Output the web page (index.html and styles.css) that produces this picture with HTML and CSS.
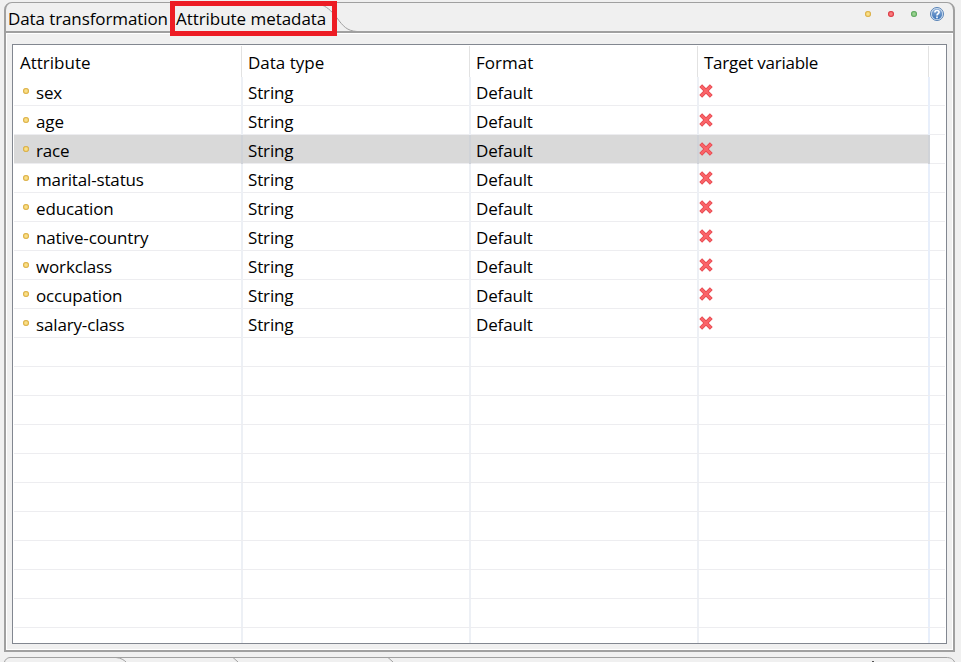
FILE: index.html
```
<!DOCTYPE html>
<html lang="en">
<head>
<meta charset="utf-8">
<title>Attribute metadata</title>
<link rel="stylesheet" href="styles.css">
</head>
<body>
<svg class="defs" width="0" height="0" aria-hidden="true">
  <defs>
    <radialGradient id="gold"><stop offset="0" stop-color="#fbe7a0"/><stop offset=".5" stop-color="#f5d677"/><stop offset="1" stop-color="#d2a02b"/></radialGradient>
    <radialGradient id="red"><stop offset="0" stop-color="#ff8c8c"/><stop offset=".5" stop-color="#f36c70"/><stop offset="1" stop-color="#d5202c"/></radialGradient>
    <radialGradient id="green"><stop offset="0" stop-color="#a5d99c"/><stop offset=".5" stop-color="#8bc884"/><stop offset="1" stop-color="#459b48"/></radialGradient>
    <linearGradient id="blue" x2="0" y2="1"><stop offset="0" stop-color="#8eafd8"/><stop offset="1" stop-color="#3c74b9"/></linearGradient>
    <symbol id="cross" viewBox="0 0 14 14">
      <path d="M1.7 1.7 12.3 12.3M12.3 1.7 1.7 12.3" stroke="#e4464e" stroke-width="4" />
      <path d="M2.1 2.1 11.9 11.9M11.9 2.1 2.1 11.9" stroke="#fa6468" stroke-width="2.4" />
    </symbol>
    <symbol id="dot" viewBox="0 0 6 6"><circle cx="3" cy="3" r="3" fill="url(#gold)"/></symbol>
  </defs>
</svg>
<main class="panel">
  <header class="tabs">
    <span class="tab first">Data transformation</span>
    <span class="tab active">Attribute metadata</span>
    <svg class="curve" width="36" height="29" viewBox="0 0 36 29"><path d="M0 2C7 5 11 10 15 15C21 23 25 28 35 28.5" fill="none" stroke="#a0a0a0"/></svg>
    <div class="tools">
      <svg width="6" height="6"><circle cx="3" cy="3" r="3" fill="url(#gold)"/></svg>
      <svg width="6" height="6"><circle cx="3" cy="3" r="3" fill="url(#red)"/></svg>
      <svg width="6" height="6"><circle cx="3" cy="3" r="3" fill="url(#green)"/></svg>
      <svg class="help" width="14" height="14" viewBox="0 0 14 14"><circle cx="7" cy="7" r="6.5" fill="#d9e5f2" stroke="#5580b5"/><circle cx="7" cy="7" r="5.2" fill="url(#blue)"/><path d="M4.9 5.5C4.9 2.9 9.1 2.9 9.1 5.3C9.1 6.8 7 6.7 7 8.4M7 9.6V11.2" fill="none" stroke="#fff" stroke-width="1.6"/></svg>
    </div>
  </header>
  <section class="content">
    <div class="table" id="table">
      <div class="row head"><span>Attribute</span><span class="dt">Data type</span><span>Format</span><span class="tv">Target variable</span><span></span></div>
    </div>
  </section>
</main>
<footer class="next">
  <svg width="951" height="5" viewBox="0 0 951 5" fill="none" stroke="#a0a0a0"><path d="M.5 5C1 3 3 .5 6 .5H942C947 .5 949 2 950.5 5M112 .5C117 1 120 3 122 5M229 .5L234 5M384 .5L389 5"/><path d="M868 4.5H870" stroke="#555"/></svg>
</footer>
<script src="table.js"></script>
</body>
</html>
```
FILE: styles.css
```
* { box-sizing: border-box; }
body {
  margin: 0;
  width: 961px;
  height: 662px;
  overflow: hidden;
  padding: 2px 0 0 4px;
  background: #f0f0f0;
  color: #000;
  font: 17px/28px "Open Sans", "Noto Sans", sans-serif;
}
.defs { position: absolute; }
.panel {
  width: 951px;
  height: 650px;
  border: 1px solid #a0a0a0;
  border-left-width: 2px;
  border-right-width: 2px;
  border-bottom-width: 2px;
  border-radius: 8px 8px 0 0;
}
.tabs { display: flex; height: 30px; }
.tab { white-space: nowrap; line-height: 31px; }
.first { width: 164px; padding-left: 2px; letter-spacing: -.1px; }
.active {
  position: relative;
  z-index: 1;
  width: 167px;
  height: 35px;
  margin-top: -2px;
  padding-left: 1px;
  border: 5px solid #ed1c24;
  line-height: 25px;
  letter-spacing: -.05px;
}
.curve { margin: 0 0 0 -15px; flex: none; }
.tools { display: flex; align-items: center; gap: 17px; margin: -8px 9px 0 auto; }
.help { margin-left: -4px; }
.content {
  height: 617px;
  padding: 10px 5px 5px;
  border: 1px solid #fff;
  padding-left: 5px;
  box-shadow: 0 -2px #a0a0a0;
}
.table {
  width: 935px;
  height: 600px;
  padding: 1px;
  border: 1px solid #828790;
  background: #fff;
  overflow: hidden;
}
.row {
  display: grid;
  grid-template-columns: 227px 228px 228px 231px 17px;
  height: 29px;
  border-bottom: 1px solid #ededf0;
}
.row > span {
  padding-left: 5px;
  border-left: 2px solid #edf0f5;
  white-space: nowrap;
  line-height: 31px;
}
.row > span:first-child { padding-left: 6px; border: 0; }
.row > span:last-child { border-color: #e8effb; }
.row.head { height: 31px; border: 0; }
.row.head > span { line-height: 33px; padding-left: 6px; border-left: 1px solid #e2e2e2; }
.row.head > span:first-child { border: 0; }
.row.head > .tv { letter-spacing: -.25px; }
.row > .name { display: flex; }
.label { font-weight: 400; letter-spacing: -.15px; }
.string, .default { letter-spacing: -.15px; }
.dot { flex: none; width: 6px; height: 6px; margin: 11px 7px 0 3px; }
.row > .target { padding-left: 0; }
.cross { display: block; width: 14px; height: 14px; margin: 7px 0 0; }
.selected { background: linear-gradient(90deg, #d9d9d9 915px, #fff 915px); }
.row.selected > span { border-color: #d0d3d8; }
.next { height: 5px; margin-top: 5px; }
.next svg { display: block; }
```
FILE: table.js
```
const names = ["sex", "age", "race", "marital-status", "education", "native-country", "workclass", "occupation", "salary-class"];
const table = document.getElementById("table");
for (let i = 0; i < 20; i++) {
  const row = document.createElement("div");
  row.className = "row" + (i === 2 ? " selected" : "");
  row.innerHTML = names[i]
    ? `<span class="name"><svg class="dot"><use href="#dot"/></svg><span class="label">${names[i]}</span></span><span class="string">String</span><span class="default">Default</span><span class="target"><svg class="cross"><use href="#cross"/></svg></span><span></span>`
    : "<span></span><span></span><span></span><span></span><span></span>";
  table.append(row);
}
```
